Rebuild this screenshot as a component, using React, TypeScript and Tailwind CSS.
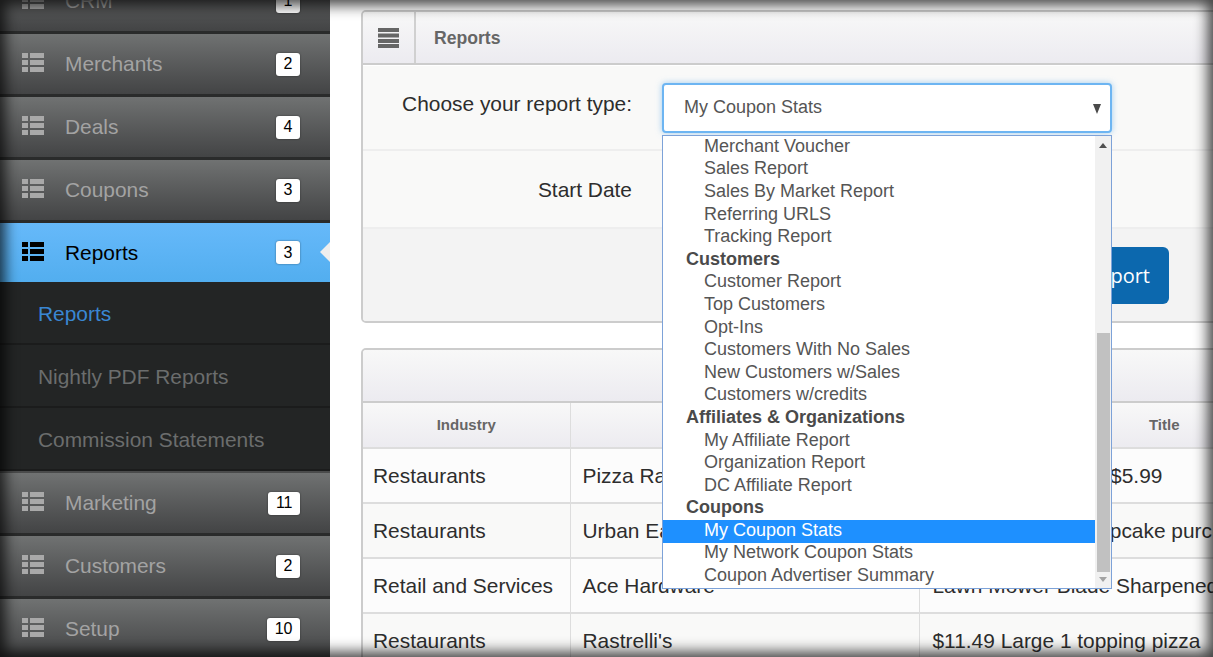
import React from "react";

const nav1 = [
  { label: "CRM", badge: "1" },
  { label: "Merchants", badge: "2" },
  { label: "Deals", badge: "4" },
  { label: "Coupons", badge: "3" },
];
const nav2 = [
  { label: "Marketing", badge: "11" },
  { label: "Customers", badge: "2" },
  { label: "Setup", badge: "10" },
];

const options: { t: string; group?: boolean; sel?: boolean }[] = [
  { t: "Merchant Voucher" },
  { t: "Sales Report" },
  { t: "Sales By Market Report" },
  { t: "Referring URLS" },
  { t: "Tracking Report" },
  { t: "Customers", group: true },
  { t: "Customer Report" },
  { t: "Top Customers" },
  { t: "Opt-Ins" },
  { t: "Customers With No Sales" },
  { t: "New Customers w/Sales" },
  { t: "Customers w/credits" },
  { t: "Affiliates & Organizations", group: true },
  { t: "My Affiliate Report" },
  { t: "Organization Report" },
  { t: "DC Affiliate Report" },
  { t: "Coupons", group: true },
  { t: "My Coupon Stats", sel: true },
  { t: "My Network Coupon Stats" },
  { t: "Coupon Advertiser Summary" },
];

const rows = [
  ["Restaurants", "Pizza Ranch", "Medium Pizzas for $5.99"],
  ["Restaurants", "Urban Eats", "$10.00 off every cupcake purchase today"],
  ["Retail and Services", "Ace Hardware", "Lawn Mower Blade Sharpened"],
  ["Restaurants", "Rastrelli's", "$11.49 Large 1 topping pizza"],
];

function ListIcon({ color }: { color: string }) {
  return (
    <svg width="22" height="19" viewBox="0 0 22 19" className="-mt-[3px] shrink-0" fill={color}>
      <rect x="0" y="0" width="6" height="5" />
      <rect x="8" y="0" width="14" height="5" />
      <rect x="0" y="7" width="6" height="5" />
      <rect x="8" y="7" width="14" height="5" />
      <rect x="0" y="14" width="6" height="5" />
      <rect x="8" y="14" width="14" height="5" />
    </svg>
  );
}

function Badge({ v }: { v: string }) {
  return (
    <span className="ml-auto mr-[30px] flex h-[23px] items-center justify-center rounded-[3px] bg-white px-[7.5px] text-[16px] text-black shadow-[0_0_2px_rgba(0,0,0,0.5)]">
      {v}
    </span>
  );
}

function NavItem({ label, badge }: { label: string; badge: string }) {
  return (
    <div className="flex h-[63px] items-center border-b-[3px] border-[#2a2b2b] bg-gradient-to-b from-[#707272] to-[#434445] pl-[22px] text-[20.9px] text-[#a3a3a3]">
      <ListIcon color="#a9a9a9" />
      <span className="ml-[21px]">{label}</span>
      <Badge v={badge} />
    </div>
  );
}

function SubItem({ label, active }: { label: string; active?: boolean }) {
  return (
    <div
      className={
        active
          ? "flex h-[63px] items-center border-b-2 border-[#1b1c1c] bg-[#232525] pl-[38px] pt-[2px] text-[20.9px] text-[#3a87d3]"
          : "flex h-[63px] items-center border-b-2 border-[#1b1c1c] bg-[#232525] pl-[38px] pt-[2px] text-[20.9px] text-[#6b6d6d]"
      }
    >
      {label}
    </div>
  );
}

export default function App() {
  return (
    <div className="relative flex h-[657px] w-[1213px] overflow-hidden bg-white font-['Liberation_Sans',Arial,sans-serif]">
      {/* Sidebar */}
      <aside className="-mt-[29px] w-[330px] shrink-0">
        {nav1.map((n) => (
          <NavItem key={n.label} {...n} />
        ))}
        <div className="relative flex h-[59px] items-center bg-gradient-to-b from-[#66b9fa] to-[#52aeef] pl-[22px] text-[20.9px] text-black">
          <ListIcon color="#000000" />
          <span className="ml-[21px]">Reports</span>
          <Badge v="3" />
          <span className="absolute right-0 top-[19px] h-0 w-0 border-y-[10px] border-r-[10px] border-y-transparent border-r-[#eeeeee]" />
        </div>
        <SubItem label="Reports" active />
        <SubItem label="Nightly PDF Reports" />
        <SubItem label="Commission Statements" />
        <div className="h-[2px] bg-[#4a4b4b]" />
        {nav2.map((n) => (
          <NavItem key={n.label} {...n} />
        ))}
      </aside>

      {/* Main */}
      <main className="relative ml-[31px] w-[1100px] shrink-0 pt-[10px]">
        {/* Form panel */}
        <section className="overflow-hidden rounded-[5px] border-2 border-[#cccccc] bg-[#f9f9f8]">
          <header className="flex h-[53px] items-stretch border-b-[2px] border-[#cccccc] bg-gradient-to-b from-[#f8f8f8] to-[#ecebf0]">
            <div className="flex w-[53px] items-center justify-center border-r-2 border-[#d0d0d0]">
              <svg width="21" height="20" viewBox="0 0 21 20" fill="#666666">
                <rect y="0" width="21" height="4" />
                <rect y="5.5" width="21" height="4" />
                <rect y="11" width="21" height="4" />
                <rect y="16" width="21" height="4" />
              </svg>
            </div>
            <h2 className="ml-[18px] mt-[2px] self-center text-[17.6px] font-bold text-[#666666]">Reports</h2>
          </header>
          <div className="h-[86px] border-t border-white border-b-2 border-b-[#eeeeee]">
            <div className="w-[269px] pt-[26px] text-right text-[20.9px] leading-[24px] text-[#2d2d2d]">
              Choose your report type:
            </div>
          </div>
          <div className="flex h-[78px] items-center border-b-2 border-[#eeeeee]">
            <div className="w-[269px] pt-[2px] text-right text-[20.9px] text-[#2d2d2d]">Start Date</div>
          </div>
          <div className="h-[92px] bg-[#f3f3f3] pt-[18px]">
            <div className="flex w-[806px] justify-end">
              <button className="flex h-[57px] items-center rounded-[6px] bg-[#0c68ae] px-[19px] font-['Open_Sans',sans-serif] text-[20px] text-white">
                Generate Report
              </button>
            </div>
          </div>
        </section>

        {/* Table panel */}
        <section className="mt-[25px] overflow-hidden rounded-[5px] border-2 border-[#cccccc] bg-[#f9f9f8]">
          <div className="h-[53px] border-b-2 border-[#cccccc] bg-gradient-to-b from-[#f8f8f8] to-[#ecebf0]" />
          <table className="w-[1044px] table-fixed border-collapse text-[20.9px] text-[#2d2d2d]">
            <colgroup>
              <col className="w-[207px]" />
              <col className="w-[349px]" />
              <col className="w-[488px]" />
            </colgroup>
            <thead>
              <tr className="h-[45px] bg-gradient-to-b from-[#f8f8f8] to-[#ecebf0] text-[15px] font-bold text-[#666666]">
                <th className="border-r border-b-2 border-[#dddddd] pt-[1px]">Industry</th>
                <th className="border-r border-b-2 border-[#dddddd] pt-[1px]">Merchant</th>
                <th className="border-b-2 border-[#dddddd] pt-[1px] pl-[2px]">Title</th>
              </tr>
            </thead>
            <tbody>
              {rows.map((r, i) => (
                <tr
                  key={i}
                  className={i % 2 === 0 ? "h-[55px] border-b-2 border-[#dddddd] bg-[#fcfcfc]" : "h-[55px] border-b-2 border-[#dddddd] bg-[#f9f9f8]"}
                >
                  <td className="whitespace-nowrap border-r border-[#dddddd] px-[10px]">{r[0]}</td>
                  <td className="whitespace-nowrap border-r border-[#dddddd] px-[12px]">{r[1]}</td>
                  <td className="whitespace-nowrap px-[13px]">{r[2]}</td>
                </tr>
              ))}
            </tbody>
          </table>
        </section>
      </main>

      {/* Open select, over the content */}
      <div className="absolute left-[662px] top-[83px] flex h-[50px] w-[450px] items-center rounded-[4px] border-2 border-[#6db5f2] bg-white pb-[2px] pl-[20px] text-[18px] text-[#555555] shadow-[0_0_6px_rgba(102,175,233,0.6)]">
        My Coupon Stats
        <span className="absolute right-[9px] top-[19px] h-0 w-0 border-x-[4.5px] border-t-[10px] border-x-transparent border-t-[#4a4a4a]" />
      </div>
      <div className="absolute left-[662px] top-[135px] flex h-[454px] w-[450px] border border-[#7da2d8] bg-white text-[18px] text-[#555555]">
        <ul className="min-w-0 flex-1">
          {options.map((o) =>
            o.group ? (
              <li key={o.t} className="flex h-[22.6px] items-center pb-[2px] pl-[23px] font-bold text-[#4a4a4a]">
                {o.t}
              </li>
            ) : o.sel ? (
              <li key={o.t} className="flex h-[22.6px] items-center bg-[#1e90ff] pb-[2px] pl-[41px] text-white">
                {o.t}
              </li>
            ) : (
              <li key={o.t} className="flex h-[22.6px] items-center pb-[2px] pl-[41px]">
                {o.t}
              </li>
            )
          )}
        </ul>
        <div className="flex w-[16px] flex-col items-center bg-[#f1f1f1]">
          <span className="mt-[7px] h-0 w-0 border-x-[4px] border-b-[5px] border-x-transparent border-b-[#505050]" />
          <span className="mt-[185px] h-[239px] w-[13px] bg-[#c1c1c1]" />
          <span className="mt-[5px] h-0 w-0 border-x-[4px] border-t-[5px] border-x-transparent border-t-[#a3a3a3]" />
        </div>
      </div>

      {/* Screenshot vignette */}
      <div className="pointer-events-none absolute inset-0 shadow-[inset_0_0_14px_5px_rgba(0,0,0,0.75)]" />
    </div>
  );
}
